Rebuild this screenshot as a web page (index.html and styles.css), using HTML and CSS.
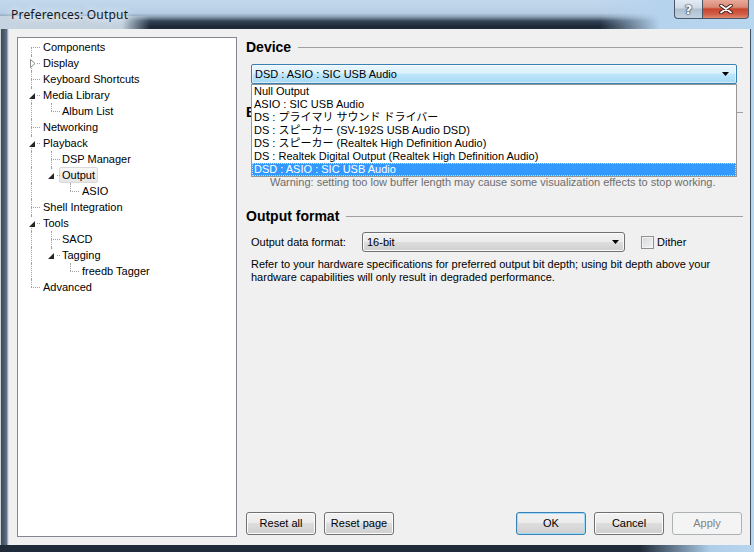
FILE: index.html
```html
<!DOCTYPE html>
<html>
<head>
<meta charset="utf-8">
<title>Preferences: Output</title>
<link rel="stylesheet" href="styles.css">
</head>
<body>
<div class="window">
  <div class="titlebar">
    <span class="title">Preferences: Output</span>
    <div class="caption-btns">
      <span class="cb help">?</span>
      <span class="cb close"><svg width="14" height="10" viewBox="0 0 14 10"><path d="M2 1.5 L12 8.5 M12 1.5 L2 8.5" stroke="#3a1a14" stroke-width="3.6" stroke-linecap="round"/><path d="M2 1.5 L12 8.5 M12 1.5 L2 8.5" stroke="#ffffff" stroke-width="1.8" stroke-linecap="round"/></svg></span>
    </div>
  </div>
  <div class="frame-row">
    <div class="lframe"></div>
    <div class="client">
      <div class="tree">
        <div class="row"><span class="g f"></span><span class="lbl">Components</span></div>
        <div class="row"><span class="g t"><i class="ex"><svg class="closed" width="6" height="9" viewBox="0 0 6 9"><path d="M0.5 0.5 L5 4.5 L0.5 8.5 Z" fill="#fff" stroke="#8a8a8a"/></svg></i></span><span class="lbl">Display</span></div>
        <div class="row"><span class="g t"></span><span class="lbl">Keyboard Shortcuts</span></div>
        <div class="row"><span class="g t"><i class="ex"><svg class="open" width="6" height="6" viewBox="0 0 6 6"><path d="M6 0 L6 6 L0 6 Z" fill="#262626"/></svg></i></span><span class="lbl">Media Library</span></div>
        <div class="row"><span class="g v"></span><span class="g l"></span><span class="lbl">Album List</span></div>
        <div class="row"><span class="g t"></span><span class="lbl">Networking</span></div>
        <div class="row"><span class="g t"><i class="ex"><svg class="open" width="6" height="6" viewBox="0 0 6 6"><path d="M6 0 L6 6 L0 6 Z" fill="#262626"/></svg></i></span><span class="lbl">Playback</span></div>
        <div class="row"><span class="g v"></span><span class="g t"></span><span class="lbl">DSP Manager</span></div>
        <div class="row"><span class="g v"></span><span class="g l"><i class="ex"><svg class="open" width="6" height="6" viewBox="0 0 6 6"><path d="M6 0 L6 6 L0 6 Z" fill="#262626"/></svg></i></span><span class="lbl sel">Output</span></div>
        <div class="row"><span class="g v"></span><span class="g"></span><span class="g l"></span><span class="lbl">ASIO</span></div>
        <div class="row"><span class="g t"></span><span class="lbl">Shell Integration</span></div>
        <div class="row"><span class="g t"><i class="ex"><svg class="open" width="6" height="6" viewBox="0 0 6 6"><path d="M6 0 L6 6 L0 6 Z" fill="#262626"/></svg></i></span><span class="lbl">Tools</span></div>
        <div class="row"><span class="g v"></span><span class="g t"></span><span class="lbl">SACD</span></div>
        <div class="row"><span class="g v"></span><span class="g l"><i class="ex"><svg class="open" width="6" height="6" viewBox="0 0 6 6"><path d="M6 0 L6 6 L0 6 Z" fill="#262626"/></svg></i></span><span class="lbl">Tagging</span></div>
        <div class="row"><span class="g v"></span><span class="g"></span><span class="g l"></span><span class="lbl">freedb Tagger</span></div>
        <div class="row"><span class="g l"></span><span class="lbl">Advanced</span></div>
      </div>
      <div class="main">
        <section class="sec device">
          <div class="hdr"><span>Device</span><i></i></div>
          <div class="combo focus">
            <span class="val">DSD : ASIO : SIC USB Audio</span>
            <svg class="arrow" width="7" height="4" viewBox="0 0 7 4"><path d="M0 0 H7 L3.5 4 Z" fill="#000"/></svg>
          </div>
          <ul class="droplist">
            <li>Null Output</li>
            <li>ASIO : SIC USB Audio</li>
            <li>DS : プライマリ サウンド ドライバー</li>
            <li>DS : スピーカー (SV-192S USB Audio DSD)</li>
            <li>DS : スピーカー (Realtek High Definition Audio)</li>
            <li>DS : Realtek Digital Output (Realtek High Definition Audio)</li>
            <li class="hl">DSD : ASIO : SIC USB Audio</li>
          </ul>
        </section>
        <section class="sec buffer">
          <div class="hdr"><span>Buffer length</span><i></i></div>
          <div class="slider-area"></div>
          <div class="warn">Warning: setting too low buffer length may cause some visualization effects to stop working.</div>
        </section>
        <section class="sec format">
          <div class="hdr"><span>Output format</span><i></i></div>
          <div class="frow">
            <span class="flabel">Output data format:</span>
            <div class="combo plain">
              <span class="val">16-bit</span>
              <svg class="arrow" width="7" height="4" viewBox="0 0 7 4"><path d="M0 0 H7 L3.5 4 Z" fill="#000"/></svg>
            </div>
            <span class="check"></span>
            <span class="checklbl">Dither</span>
          </div>
          <p class="note">Refer to your hardware specifications for preferred output bit depth; using bit depth above your<br>hardware capabilities will only result in degraded performance.</p>
        </section>
        <div class="buttons">
          <div class="bgroup">
            <span class="btn">Reset all</span>
            <span class="btn">Reset page</span>
          </div>
          <div class="bgroup">
            <span class="btn default">OK</span>
            <span class="btn">Cancel</span>
            <span class="btn disabled">Apply</span>
          </div>
        </div>
      </div>
    </div>
    <div class="rframe"></div>
  </div>
</div>
</body>
</html>
```
FILE: styles.css
```css
html, body {
  margin: 0;
  padding: 0;
  background: #1d2937;
}
body {
  font-family: "Liberation Sans", "Noto Sans CJK JP", sans-serif;
  font-size: 11px;
  color: #000;
}
.window {
  width: 754px;
  height: 552px;
  display: flex;
  flex-direction: column;
  overflow: hidden;
  background: linear-gradient(to right, #1f2b39 0, #1f2b39 640px, #aecde9 710px, #b9d6ef 754px);
}

/* title bar */
.titlebar {
  height: 29px;
  flex: none;
  display: flex;
  align-items: flex-start;
  background:
    linear-gradient(to right, #c6d3e0 0, #c3d1df 122px, rgba(190,205,220,0) 150px) left bottom / 100% 13px no-repeat,
    linear-gradient(to right, rgba(184,212,238,0) 600px, #b6d3ee 660px, #b9d6ef 754px),
    linear-gradient(to bottom, #c2d8ec 0, #b7cfe6 13px, #8a9db0 17px, #33455a 21px, #1e2a38 26px, #1d2936 29px);
}
.title {
  margin: 7px 0 0 11px;
  font-family: "Noto Sans", "Liberation Sans", sans-serif;
  font-size: 12px;
  line-height: 16px;
  letter-spacing: 0.2px;
  color: #101820;
  text-shadow: 0 0 6px #eef4fa, 0 0 10px #eef4fa;
}
.caption-btns {
  margin-left: auto;
  margin-right: 5px;
  display: flex;
}
.cb {
  height: 19px;
  box-sizing: border-box;
  border: 1px solid #4a5766;
  border-top: none;
  display: flex;
  align-items: center;
  justify-content: center;
}
.help {
  width: 28px;
  border-radius: 0 0 0 4px;
  border-right: none;
  background: linear-gradient(to bottom, #e3ebf3 0, #cfdbe7 45%, #aebfd0 50%, #c2d2e2 100%);
  font-family: "DejaVu Sans", sans-serif;
  font-weight: bold;
  font-size: 13px;
  color: #fff;
  text-shadow: 0 0 1px #23303e, 0 0 1px #23303e, 0 0 2px #23303e;
}
.close {
  width: 47px;
  border-radius: 0 0 4px 0;
  background: linear-gradient(to bottom, #e9a99a 0, #d98a78 40%, #c7452c 50%, #d2604a 80%, #e08a6f 100%);
}

/* frame */
.frame-row {
  display: flex;
  height: 516px;
  flex: none;
}
.lframe {
  width: 9px;
  flex: none;
  background: linear-gradient(to right, #c8d0d8 0, #c8d0d8 1px, #3d4b5a 1px, #4c5b6b 4px, #66768a 7px, #d6dde4 8px, #d6dde4 9px);
}
.rframe {
  width: 4px;
  flex: none;
  background: linear-gradient(to right, #3e4e60 0, #3e4e60 1px, #b9d6ef 1px);
}
.client {
  width: 741px;
  height: 516px;
  flex: none;
  box-sizing: border-box;
  background: #f0f0f0;
  display: flex;
  gap: 9px;
  padding: 8px 6px 8px 8px;
}

/* tree */
.tree {
  width: 220px;
  flex: none;
  box-sizing: border-box;
  border: 1px solid #828790;
  background: #fff;
  padding: 1px 0 0 4px;
}
.row {
  height: 16px;
  display: flex;
  align-items: center;
}
.g {
  position: relative;
  flex: none;
  width: 20px;
  height: 16px;
}
.g:nth-child(2) { width: 19px; }
.g.v::before, .g.t::before, .g.l::before, .g.f::before {
  content: "";
  position: absolute;
  left: 9px;
  top: 0;
  height: 16px;
  border-left: 1px dotted #a0a0a0;
}
.g.l::before { height: 8px; }
.g.f::before { top: 8px; height: 8px; }
.g.t::after, .g.l::after, .g.f::after {
  content: "";
  position: absolute;
  left: 9px;
  top: 8px;
  width: 9px;
  border-top: 1px dotted #a0a0a0;
}
.ex {
  position: absolute;
  left: 5px;
  top: 3px;
  width: 10px;
  height: 10px;
  background: #fff;
  z-index: 1;
}
.ex svg { position: absolute; display: block; }
.ex svg.open { left: 2px; top: 3px; }
.ex svg.closed { left: 3px; top: 1px; }
.g:nth-child(2) .ex svg.open { left: 1px; }
.lbl {
  margin-left: -2px;
  padding: 0 2px;
  border: 1px solid transparent;
  border-radius: 2px;
  line-height: 14px;
  white-space: nowrap;
}
.lbl.sel {
  border-color: #d9d9d9;
  background: linear-gradient(to bottom, #f8f8f8, #e5e5e5);
}

/* main panel */
.main {
  width: 498px;
  flex: none;
  display: flex;
  flex-direction: column;
}
.sec { position: relative; }
.hdr {
  display: flex;
  align-items: center;
  height: 16px;
  font-size: 14px;
  font-weight: bold;
  line-height: 16px;
  white-space: nowrap;
}
.hdr i {
  flex: 1;
  margin-left: 7px;
  margin-right: 1px;
  border-top: 1px solid #a0a0a0;
  height: 0;
}
.device .hdr { margin-top: 2px; }
.combo {
  box-sizing: border-box;
  height: 20px;
  display: flex;
  align-items: center;
  justify-content: space-between;
  padding: 0 7px 0 3px;
}
.device .combo {
  margin: 9px 7px 0 5px;
}
.combo.focus {
  border: 1px solid #3c7fb1;
  border-radius: 2px;
  background: linear-gradient(to bottom, #ebf7fd 0, #dbf1fc 45%, #bfe6fb 50%, #a7d8f4 100%);
  box-shadow: inset 0 0 0 1px rgba(255,255,255,0.5);
}
.combo.plain {
  border: 1px solid #707070;
  border-radius: 3px;
  background: linear-gradient(to bottom, #f2f2f2 0, #ebebeb 50%, #dddddd 50%, #cfcfcf 100%);
  box-shadow: inset 0 0 0 1px #fafafa;
}
.combo .val { white-space: nowrap; }
.arrow { display: block; flex: none; }

.droplist {
  position: absolute;
  left: 5px;
  top: 47px;
  width: 486px;
  box-sizing: border-box;
  margin: 0;
  padding: 0;
  list-style: none;
  background: #fff;
  border: 1px solid #969696;
  z-index: 5;
}
.droplist li {
  height: 13px;
  line-height: 13px;
  padding-left: 2px;
  white-space: nowrap;
  overflow: hidden;
}
.droplist li.hl {
  background: #3399ff;
  color: #fff;
  outline: 1px dotted #c8e2ff;
  outline-offset: -1px;
}

.buffer .hdr { margin-top: 20px; }
.slider-area { height: 55px; }
.warn {
  padding-left: 24px;
  line-height: 14px;
  color: #6d6d6d;
  white-space: nowrap;
}

.format .hdr { margin-top: 19px; }
.frow {
  display: flex;
  align-items: center;
  margin: 8px 0 0 5px;
  height: 20px;
}
.flabel { width: 111px; flex: none; white-space: nowrap; }
.format .combo { width: 263px; flex: none; padding-left: 4px; padding-right: 5px; }
.check {
  width: 13px;
  height: 13px;
  box-sizing: border-box;
  margin-left: 16px;
  border: 1px solid #8e8f8f;
  background: linear-gradient(135deg, #d4d8dc 0, #f4f4f4 100%);
  box-shadow: inset 0 0 0 1px #f4f4f4;
  flex: none;
}
.checklbl { margin-left: 3px; }
.note {
  margin: 6px 0 0 5px;
  line-height: 13px;
  white-space: nowrap;
}

/* buttons */
.buttons {
  margin-top: auto;
  margin-bottom: 2px;
  padding-right: 2px;
  display: flex;
  justify-content: space-between;
}
.bgroup { display: flex; gap: 8px; }
.btn {
  width: 70px;
  height: 23px;
  box-sizing: border-box;
  border: 1px solid #707070;
  border-radius: 3px;
  background: linear-gradient(to bottom, #f2f2f2 0, #ebebeb 50%, #dddddd 50%, #cfcfcf 100%);
  box-shadow: inset 0 0 0 1px #fcfcfc;
  text-align: center;
  line-height: 21px;
  white-space: nowrap;
}
.btn.default {
  border-color: #3c7fb1;
  box-shadow: inset 0 0 0 1px #9fdcf9;
}
.btn.disabled {
  border-color: #adb2b5;
  background: #f4f4f4;
  box-shadow: none;
  color: #838383;
}
```
